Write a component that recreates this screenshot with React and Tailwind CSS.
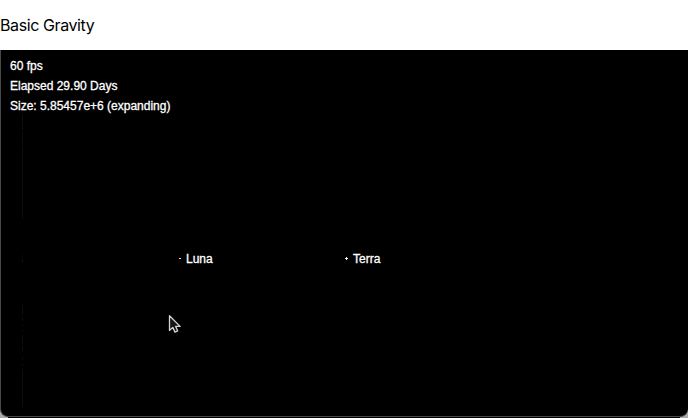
const bodies = [
  { name: "Luna", left: 178, top: 250 },
  { name: "Terra", left: 345, top: 250 },
];

function Title() {
  return (
    <header className="flex h-[50px] shrink-0 items-center bg-white">
      <h1 className="whitespace-nowrap font-['Inter','Liberation_Sans',sans-serif] text-[16px] leading-6 tracking-[-0.4px] text-black">
        Basic Gravity
      </h1>
    </header>
  );
}

function Stats() {
  return (
    <div className="flex flex-col pt-[6px] pl-[9px] text-[12px] leading-5">
      <p>60 fps</p>
      <p>Elapsed 29.90 Days</p>
      <p>Size: 5.85457e+6 (expanding)</p>
    </div>
  );
}

function Body({ name, left, top }) {
  return (
    <div className="absolute flex h-[18px] items-center" style={{ left, top: top - 50 }}>
      <svg width="4" height="18" className="shrink-0" shapeRendering="crispEdges">
        {name === "Terra" ? (
          <path d="M0 8h3v1H0zM1 7h1v3H1z" fill="#eee" />
        ) : (
          <path d="M1 8h2v1H1z" fill="#ddd" />
        )}
      </svg>
      <span className="pl-1 text-[12px] leading-[18px]">{name}</span>
    </div>
  );
}

function Cursor() {
  return (
    <svg className="absolute top-[264px] left-[167px]" width="16" height="20" viewBox="0 0 16 20">
      <path
        d="M2.5 1.8v14.7l3.3-3.1 2.2 4.7 2.7-1.2-2-4.5h4.4z"
        fill="#151515"
        stroke="#d4d4d4"
        strokeWidth="1.3"
        strokeLinejoin="round"
      />
    </svg>
  );
}

export default function App() {
  return (
    <main className="flex h-[418px] w-[688px] flex-col overflow-hidden bg-white">
      <Title />
      <section className="relative flex-1 bg-[linear-gradient(to_top,#aaa_10px,#000_10px)]">
        <div className="h-[367px] overflow-hidden rounded-b-[8px] border-b border-l border-[#484848] bg-black font-['Liberation_Sans',Arial,sans-serif] text-white [-webkit-text-stroke:0.3px_white]">
          <Stats />
        </div>
        <div className="absolute bottom-0 left-2 right-2 h-px bg-black" />
        <svg className="absolute top-0 left-[22px]" width="1" height="358">
          <path
            d="M.5 65v15M.5 82v12M.5 95v74M.5 205v2M.5 209v3M.5 255v9M.5 268v3M.5 274v2M.5 280v2M.5 285v9M.5 296v6M.5 307v3M.5 314v2M.5 319v38"
            stroke="#0e0e0e"
          />
        </svg>
        <div className="font-['Liberation_Sans',Arial,sans-serif] text-white [-webkit-text-stroke:0.3px_white]">
          {bodies.map((body) => (
            <Body key={body.name} {...body} />
          ))}
        </div>
        <Cursor />
      </section>
    </main>
  );
}
